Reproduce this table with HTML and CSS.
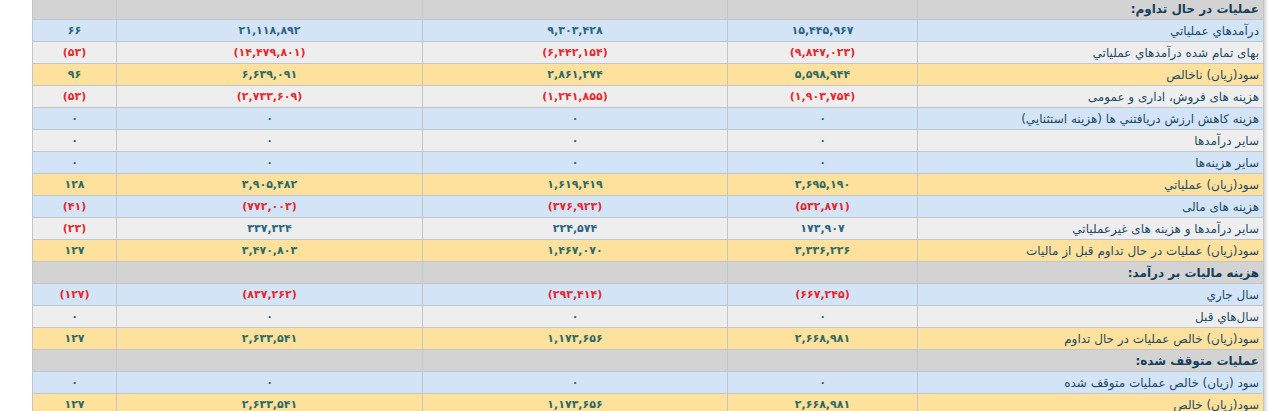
FILE: index.html
```html
<!DOCTYPE html>
<html lang="fa" dir="rtl">
<head>
<meta charset="utf-8">
<link rel="stylesheet" href="styles.css">
</head>
<body>
<div class="wrap">
<table class="fin">
<colgroup>
<col class="c-label"><col class="c-a"><col class="c-b"><col class="c-c"><col class="c-d">
</colgroup>
<tbody>
<tr class="hdr"><td class="lbl">عمليات در حال تداوم:</td><td></td><td></td><td></td><td></td></tr>
<tr class="blue"><td class="lbl">درآمدهاي عملياتي</td><td>۱۵,۴۴۵,۹۶۷</td><td>۹,۳۰۳,۴۲۸</td><td>۲۱,۱۱۸,۸۹۲</td><td>۶۶</td></tr>
<tr class="grey"><td class="lbl">بهای تمام شده درآمدهاي عملياتي</td><td class="neg">(۹,۸۴۷,۰۲۳)</td><td class="neg">(۶,۴۴۲,۱۵۴)</td><td class="neg">(۱۴,۴۷۹,۸۰۱)</td><td class="neg">(۵۳)</td></tr>
<tr class="yel"><td class="lbl">سود(زيان) ناخالص</td><td>۵,۵۹۸,۹۴۴</td><td>۲,۸۶۱,۲۷۴</td><td>۶,۶۳۹,۰۹۱</td><td>۹۶</td></tr>
<tr class="grey"><td class="lbl">هزينه هاى فروش، ادارى و عمومى</td><td class="neg">(۱,۹۰۳,۷۵۴)</td><td class="neg">(۱,۲۴۱,۸۵۵)</td><td class="neg">(۲,۷۳۳,۶۰۹)</td><td class="neg">(۵۳)</td></tr>
<tr class="blue"><td class="lbl">هزينه كاهش ارزش دريافتني ها (هزينه استثنايي)</td><td>۰</td><td>۰</td><td>۰</td><td>۰</td></tr>
<tr class="grey"><td class="lbl">ساير درآمدها</td><td>۰</td><td>۰</td><td>۰</td><td>۰</td></tr>
<tr class="blue"><td class="lbl">ساير هزينه‌ها</td><td>۰</td><td>۰</td><td>۰</td><td>۰</td></tr>
<tr class="yel"><td class="lbl">سود(زيان) عملياتي</td><td>۳,۶۹۵,۱۹۰</td><td>۱,۶۱۹,۴۱۹</td><td>۳,۹۰۵,۴۸۲</td><td>۱۲۸</td></tr>
<tr class="blue"><td class="lbl">هزينه هاى مالى</td><td class="neg">(۵۳۲,۸۷۱)</td><td class="neg">(۳۷۶,۹۲۳)</td><td class="neg">(۷۷۲,۰۰۳)</td><td class="neg">(۴۱)</td></tr>
<tr class="grey"><td class="lbl">ساير درآمدها و هزينه هاى غيرعملياتي</td><td>۱۷۳,۹۰۷</td><td>۲۲۴,۵۷۴</td><td>۳۳۷,۳۲۴</td><td class="neg">(۲۳)</td></tr>
<tr class="yel"><td class="lbl">سود(زيان) عمليات در حال تداوم قبل از ماليات</td><td>۳,۳۳۶,۲۲۶</td><td>۱,۴۶۷,۰۷۰</td><td>۳,۴۷۰,۸۰۳</td><td>۱۲۷</td></tr>
<tr class="hdr"><td class="lbl">هزينه ماليات بر درآمد:</td><td></td><td></td><td></td><td></td></tr>
<tr class="blue"><td class="lbl">سال جاري</td><td class="neg">(۶۶۷,۲۴۵)</td><td class="neg">(۲۹۳,۴۱۴)</td><td class="neg">(۸۳۷,۲۶۲)</td><td class="neg">(۱۲۷)</td></tr>
<tr class="grey"><td class="lbl">سال‌هاي قبل</td><td>۰</td><td>۰</td><td>۰</td><td>۰</td></tr>
<tr class="yel"><td class="lbl">سود(زيان) خالص عمليات در حال تداوم</td><td>۲,۶۶۸,۹۸۱</td><td>۱,۱۷۳,۶۵۶</td><td>۲,۶۳۳,۵۴۱</td><td>۱۲۷</td></tr>
<tr class="hdr"><td class="lbl">عمليات متوقف شده:</td><td></td><td></td><td></td><td></td></tr>
<tr class="blue"><td class="lbl">سود (زيان) خالص عمليات متوقف شده</td><td>۰</td><td>۰</td><td>۰</td><td>۰</td></tr>
<tr class="yel"><td class="lbl">سود(زيان) خالص</td><td>۲,۶۶۸,۹۸۱</td><td>۱,۱۷۳,۶۵۶</td><td>۲,۶۳۳,۵۴۱</td><td>۱۲۷</td></tr>
</tbody>
</table>
</div>
</body>
</html>
```
FILE: styles.css
```css
html, body {
  margin: 0;
  padding: 0;
  background: #ffffff;
}
body {
  font-family: "DejaVu Sans", "Noto Sans", sans-serif;
  overflow: hidden;
}
.wrap {
  direction: ltr;
  padding-left: 32px;
  margin-top: -3px;
}
.fin {
  direction: rtl;
  table-layout: fixed;
  border-collapse: collapse;
  width: 1231px;
  box-shadow: 2px 0 3px rgba(0,0,0,0.18);
}
.c-label { width: 346px; }
.c-a { width: 190px; }
.c-b { width: 305px; }
.c-c { width: 306px; }
.c-d { width: 84px; }
.fin td {
  height: 22px;
  padding: 0 4px;
  border: 1px solid #c3c6c9;
  text-align: center;
  font-size: 11px;
  font-weight: bold;
  color: #2a6485;
  white-space: nowrap;
  overflow: hidden;
  box-sizing: border-box;
}
.fin td.lbl {
  text-align: right;
  color: #1d4a68;
  font-weight: normal;
  font-size: 12px;
}
.fin tr.hdr td { background: #d3d3d3; }
.fin tr.hdr td.lbl { font-weight: bold; color: #173f5c; }
.fin tr.blue td { background: #d2e4f5; }
.fin tr.grey td { background: #eeeeee; }
.fin tr.yel td { background: #fde19d; }
.fin tr.yel td { color: #2d6a62; }
.fin tr.yel td.lbl { color: #1d4a68; }
.fin td.neg { color: #e8262d; }
.fin tr.yel td.neg { color: #e8262d; }
```
